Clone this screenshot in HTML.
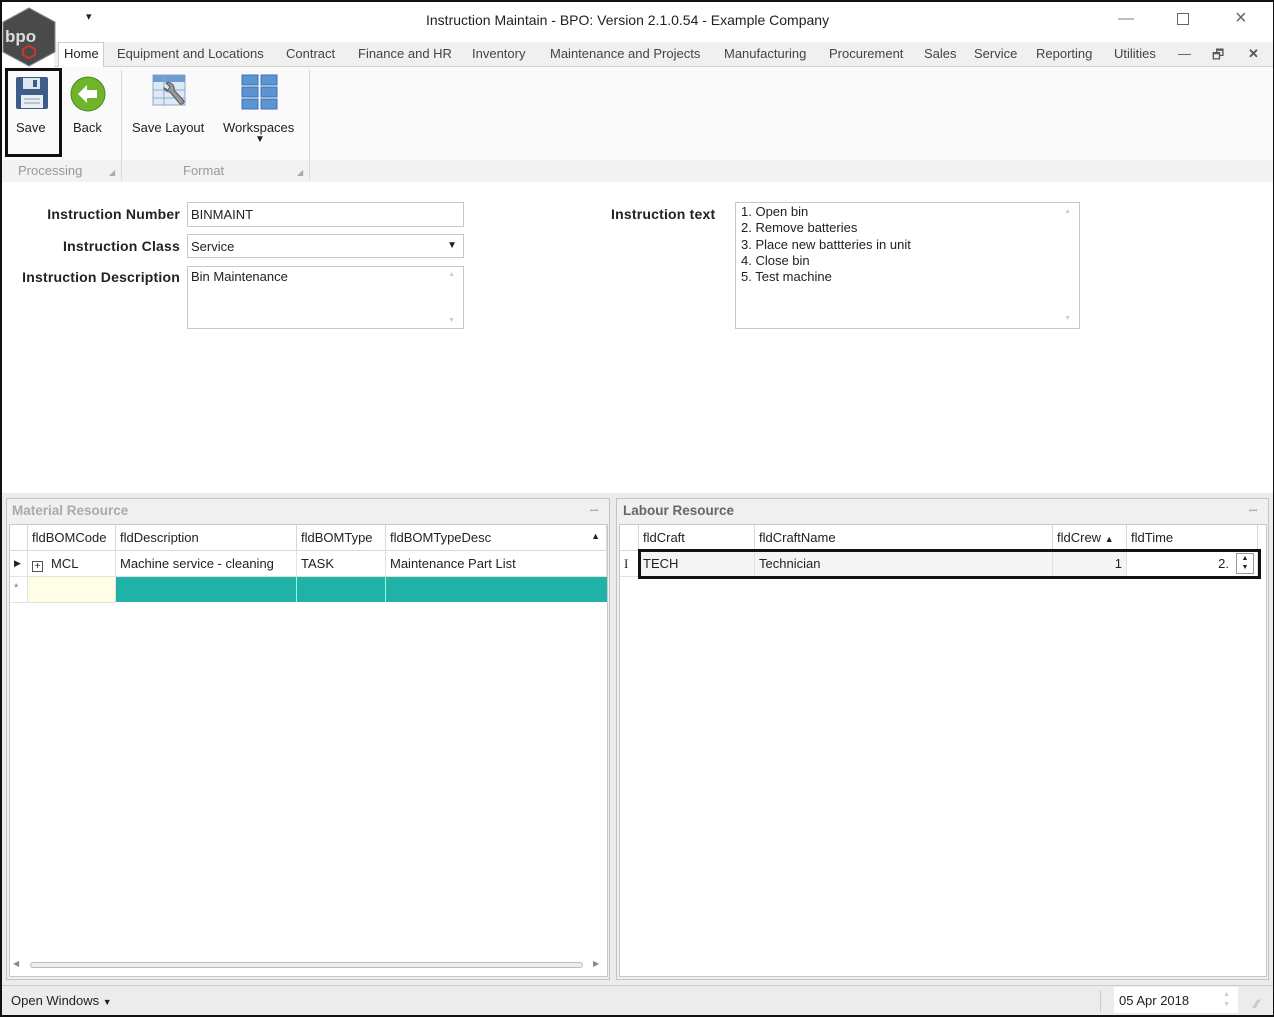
<!DOCTYPE html>
<html><head><meta charset="utf-8"><style>
*{margin:0;padding:0;box-sizing:border-box}
body{width:1274px;height:1017px;position:relative;background:#fff;font-family:"Liberation Sans",sans-serif;font-size:13px;color:#222;overflow:hidden}
.a{position:absolute;white-space:nowrap}
.frame{position:absolute;left:0;top:0;width:1274px;height:1017px;border:2px solid #111;border-right-width:1px;pointer-events:none}
.tab{position:absolute;top:46px}
.lbl{font-weight:bold;text-align:right;width:180px;font-size:14px;letter-spacing:0.2px}
.box{position:absolute;border:1px solid #c8c8c8;background:#fff;padding:2px 3px}
.hdr{position:absolute;height:26px;border-right:1px solid #d8d8d8;border-bottom:1px solid #d8d8d8;padding:5px 4px;background:#fff}
.cell{position:absolute;height:26px;border-right:1px solid #e2e2e2;border-bottom:1px solid #e2e2e2;padding:5px 4px}
</style></head><body>
<div class="a" style="left:0;top:0;width:1274px;height:42px;background:#fff"></div>
<div class="a" style="left:54px;top:42px;width:1220px;height:25px;background:#f0f0f0;border-bottom:1px solid #d0d0d0"></div>
<svg class="a" style="left:1px;top:6px" width="56" height="62" viewBox="0 0 56 62"><polygon points="28,2 54,16 54,46 28,60 2,46 2,16" fill="#4a4a4a" stroke="#888"/><text x="4" y="36" font-family="Liberation Sans" font-size="17" fill="#ddd" font-weight="bold">bpo</text><polygon points="22,43 28,40 34,43 34,49 28,52 22,49" fill="none" stroke="#c33" stroke-width="2"/></svg>
<div class="a" style="left:86px;top:10px;font-size:11px">▾</div>
<div class="a" style="left:426px;top:12px;font-size:14px;color:#222">Instruction Maintain - BPO: Version 2.1.0.54 - Example Company</div>
<div class="a" style="left:1118px;top:10px;color:#888;font-size:16px">&#8212;</div>
<div class="a" style="left:1177px;top:13px;width:12px;height:12px;border:1px solid #666"></div>
<div class="a" style="left:1235px;top:7px;color:#666;font-size:20px">×</div>
<div class="a" style="left:58px;top:42px;width:46px;height:26px;background:#fff;border:1px solid #ccc;border-bottom:none"></div>
<div class="tab a" style="left:64px">Home</div>
<div class="tab a" style="left:117px;color:#444">Equipment and Locations</div>
<div class="tab a" style="left:286px;color:#444">Contract</div>
<div class="tab a" style="left:358px;color:#444">Finance and HR</div>
<div class="tab a" style="left:472px;color:#444">Inventory</div>
<div class="tab a" style="left:550px;color:#444">Maintenance and Projects</div>
<div class="tab a" style="left:724px;color:#444">Manufacturing</div>
<div class="tab a" style="left:829px;color:#444">Procurement</div>
<div class="tab a" style="left:924px;color:#444">Sales</div>
<div class="tab a" style="left:974px;color:#444">Service</div>
<div class="tab a" style="left:1036px;color:#444">Reporting</div>
<div class="tab a" style="left:1114px;color:#444">Utilities</div>
<div class="tab a" style="left:1178px;color:#555">&#8212;</div>
<div class="tab a" style="left:1212px;color:#555">🗗</div>
<div class="tab a" style="left:1248px;color:#555;font-weight:bold">✕</div>
<div class="a" style="left:2px;top:67px;width:1272px;height:115px;background:#fafafa;border-bottom:1px solid #c8c8c8"></div>
<div class="a" style="left:2px;top:160px;width:1272px;height:22px;background:#f2f2f2"></div>
<div class="a" style="left:121px;top:70px;width:1px;height:110px;background:#d8d8d8"></div>
<div class="a" style="left:309px;top:70px;width:1px;height:110px;background:#d8d8d8"></div>
<div class="a" style="left:5px;top:68px;width:57px;height:89px;border:3px solid #111"></div>
<svg class="a" style="left:15px;top:76px" width="34" height="34" viewBox="0 0 34 34"><rect x="1" y="1" width="32" height="32" rx="2" fill="#3d5d88"/><rect x="8" y="2" width="17" height="11" fill="#dfe6ef"/><rect x="18" y="4" width="4" height="7" fill="#3d5d88"/><rect x="6" y="19" width="22" height="13" fill="#e8eef5"/><line x1="9" y1="23" x2="25" y2="23" stroke="#99a"/><line x1="9" y1="27" x2="25" y2="27" stroke="#99a"/></svg>
<div class="a" style="left:16px;top:120px">Save</div>
<svg class="a" style="left:70px;top:76px" width="36" height="36"><circle cx="18" cy="18" r="17" fill="#6fb52c" stroke="#4d8a1c"/><polygon points="8,18 17,9 17,14 27,14 27,22 17,22 17,27" fill="#fff"/></svg>
<div class="a" style="left:73px;top:120px">Back</div>
<svg class="a" style="left:152px;top:74px" width="38" height="38"><rect x="1" y="1" width="32" height="30" fill="#dfe9f5" stroke="#8aa9cf"/><rect x="1" y="1" width="32" height="7" fill="#6f9bd0"/><line x1="12" y1="1" x2="12" y2="31" stroke="#8aa9cf"/><line x1="1" y1="16" x2="33" y2="16" stroke="#8aa9cf"/><line x1="1" y1="24" x2="33" y2="24" stroke="#8aa9cf"/><path d="M18 18 l10 12 a3 3 0 0 0 4 -3 l-10 -11 a6 6 0 0 0 -8 -7 l4 4 -2 3 -4 -2 a6 6 0 0 0 6 4z" fill="#999" stroke="#555"/></svg>
<div class="a" style="left:132px;top:120px">Save Layout</div>
<svg class="a" style="left:241px;top:74px" width="38" height="38"><g fill="#5b93d3" stroke="#3a70b0"><rect x="1" y="1" width="16" height="10"/><rect x="20" y="1" width="16" height="10"/><rect x="1" y="13" width="16" height="10"/><rect x="20" y="13" width="16" height="10"/><rect x="1" y="25" width="16" height="10"/><rect x="20" y="25" width="16" height="10"/></g></svg>
<div class="a" style="left:223px;top:120px">Workspaces</div>
<div class="a" style="left:255px;top:134px;font-size:10px">▼</div>
<div class="a" style="left:18px;top:163px;color:#999">Processing</div>
<div class="a" style="left:183px;top:163px;color:#999">Format</div>
<div class="a" style="left:109px;top:168px;color:#aaa;font-size:8px">◢</div>
<div class="a" style="left:297px;top:168px;color:#aaa;font-size:8px">◢</div>
<div class="a lbl" style="left:0;top:206px">Instruction Number</div>
<div class="a lbl" style="left:0;top:238px">Instruction Class</div>
<div class="a lbl" style="left:0;top:269px">Instruction Description</div>
<div class="box" style="left:187px;top:202px;width:277px;height:25px;padding-top:4px">BINMAINT</div>
<div class="box" style="left:187px;top:234px;width:277px;height:24px;padding-top:4px">Service<span style="position:absolute;right:6px;top:5px;font-size:10px">▼</span></div>
<div class="box" style="left:187px;top:266px;width:277px;height:63px">Bin Maintenance<span style="position:absolute;right:8px;top:4px;font-size:7px;color:#ccc">▲</span><span style="position:absolute;right:8px;bottom:4px;font-size:7px;color:#ccc">▼</span></div>
<div class="a" style="left:611px;top:206px;font-weight:bold;font-size:14px;letter-spacing:0.2px">Instruction text</div>
<div class="box" style="left:735px;top:202px;width:345px;height:127px;line-height:16.3px;padding-top:1px;padding-left:5px">1. Open bin<br>2. Remove batteries<br>3. Place new battteries in unit<br>4. Close bin<br>5. Test machine<span style="position:absolute;right:8px;top:4px;font-size:7px;color:#ccc;line-height:10px">▲</span><span style="position:absolute;right:8px;bottom:4px;font-size:7px;color:#ccc;line-height:10px">▼</span></div>
<div class="a" style="left:2px;top:493px;width:1272px;height:492px;background:#ececec"></div>
<div class="a" style="left:6px;top:498px;width:604px;height:482px;border:1px solid #c4c4c4;background:#f0f0f0"></div>
<div class="a" style="left:12px;top:503px;color:#aaa;font-weight:bold;font-size:13.5px">Material Resource</div>
<div class="a" style="left:590px;top:503px;color:#999;font-size:10px">ꟷ</div>
<div class="a" style="left:9px;top:524px;width:599px;height:453px;background:#fff;border:1px solid #c8c8c8"></div>
<div class="hdr" style="left:10px;top:525px;width:18px"></div>
<div class="hdr" style="left:28px;top:525px;width:88px">fldBOMCode</div>
<div class="hdr" style="left:116px;top:525px;width:181px">fldDescription</div>
<div class="hdr" style="left:297px;top:525px;width:89px">fldBOMType</div>
<div class="hdr" style="left:386px;top:525px;width:221px">fldBOMTypeDesc<span style="position:absolute;right:6px;top:6px;font-size:9px">▲</span></div>
<div class="cell" style="left:10px;top:551px;width:18px;font-size:9px;padding-top:7px">▶</div>
<div class="cell" style="left:28px;top:551px;width:88px"><span style="display:inline-block;width:11px;height:11px;border:1px solid #555;font-size:10px;line-height:9px;text-align:center;margin-right:8px;vertical-align:-1px">+</span>MCL</div>
<div class="cell" style="left:116px;top:551px;width:181px">Machine service - cleaning</div>
<div class="cell" style="left:297px;top:551px;width:89px">TASK</div>
<div class="cell" style="left:386px;top:551px;width:221px">Maintenance Part List</div>
<div class="cell" style="left:10px;top:577px;width:18px;color:#777;font-size:11px">*</div>
<div class="cell" style="left:28px;top:577px;width:88px;background:#fffde6"></div>
<div class="a" style="left:116px;top:577px;width:491px;height:25px;background:#20b2a6"></div>
<div class="a" style="left:296px;top:577px;width:1px;height:25px;background:#8fd"></div>
<div class="a" style="left:385px;top:577px;width:1px;height:25px;background:#8fd"></div>
<div class="a" style="left:30px;top:962px;width:553px;height:6px;border:1px solid #bbb;border-radius:3px;background:#eee"></div>
<div class="a" style="left:13px;top:959px;font-size:8px;color:#888">◀</div>
<div class="a" style="left:593px;top:959px;font-size:8px;color:#888">▶</div>
<div class="a" style="left:616px;top:498px;width:653px;height:482px;border:1px solid #c4c4c4;background:#f0f0f0"></div>
<div class="a" style="left:623px;top:503px;color:#666;font-weight:bold;font-size:13.5px">Labour Resource</div>
<div class="a" style="left:1249px;top:503px;color:#999;font-size:10px">ꟷ</div>
<div class="a" style="left:619px;top:524px;width:648px;height:453px;background:#fff;border:1px solid #c8c8c8"></div>
<div class="hdr" style="left:620px;top:525px;width:19px"></div>
<div class="hdr" style="left:639px;top:525px;width:116px">fldCraft</div>
<div class="hdr" style="left:755px;top:525px;width:298px">fldCraftName</div>
<div class="hdr" style="left:1053px;top:525px;width:74px">fldCrew <span style="font-size:9px">▲</span></div>
<div class="hdr" style="left:1127px;top:525px;width:131px">fldTime</div>
<div class="cell" style="left:620px;top:551px;width:19px;font-family:'Liberation Serif'">I</div>
<div class="cell" style="left:639px;top:551px;width:116px;background:#f4f4f4">TECH</div>
<div class="cell" style="left:755px;top:551px;width:298px;background:#f4f4f4">Technician</div>
<div class="cell" style="left:1053px;top:551px;width:74px;background:#f4f4f4;text-align:right">1</div>
<div class="cell" style="left:1127px;top:551px;width:131px;text-align:right;padding-right:28px">2.</div>
<div class="a" style="left:1236px;top:553px;width:18px;height:21px;border:1px solid #999;font-size:7px;line-height:9px;text-align:center">▲<br>▼</div>
<div class="a" style="left:638px;top:549px;width:623px;height:30px;border:3px solid #111"></div>
<div class="a" style="left:2px;top:985px;width:1272px;height:32px;background:#ececec;border-top:1px solid #ccc"></div>
<div class="a" style="left:11px;top:993px">Open Windows <span style="font-size:9px">▼</span></div>
<div class="a" style="left:1100px;top:990px;width:1px;height:22px;background:#ccc"></div>
<div class="a" style="left:1114px;top:987px;width:124px;height:26px;background:#fff;padding:6px 5px">05 Apr 2018<span style="position:absolute;right:8px;top:3px;font-size:7px;color:#ccc;line-height:10px">▲<br>▼</span></div>
<div class="a" style="left:1255px;top:997px;color:#aaa;font-size:12px">⁄⁄</div>
<div class="frame"></div>
</body></html>
